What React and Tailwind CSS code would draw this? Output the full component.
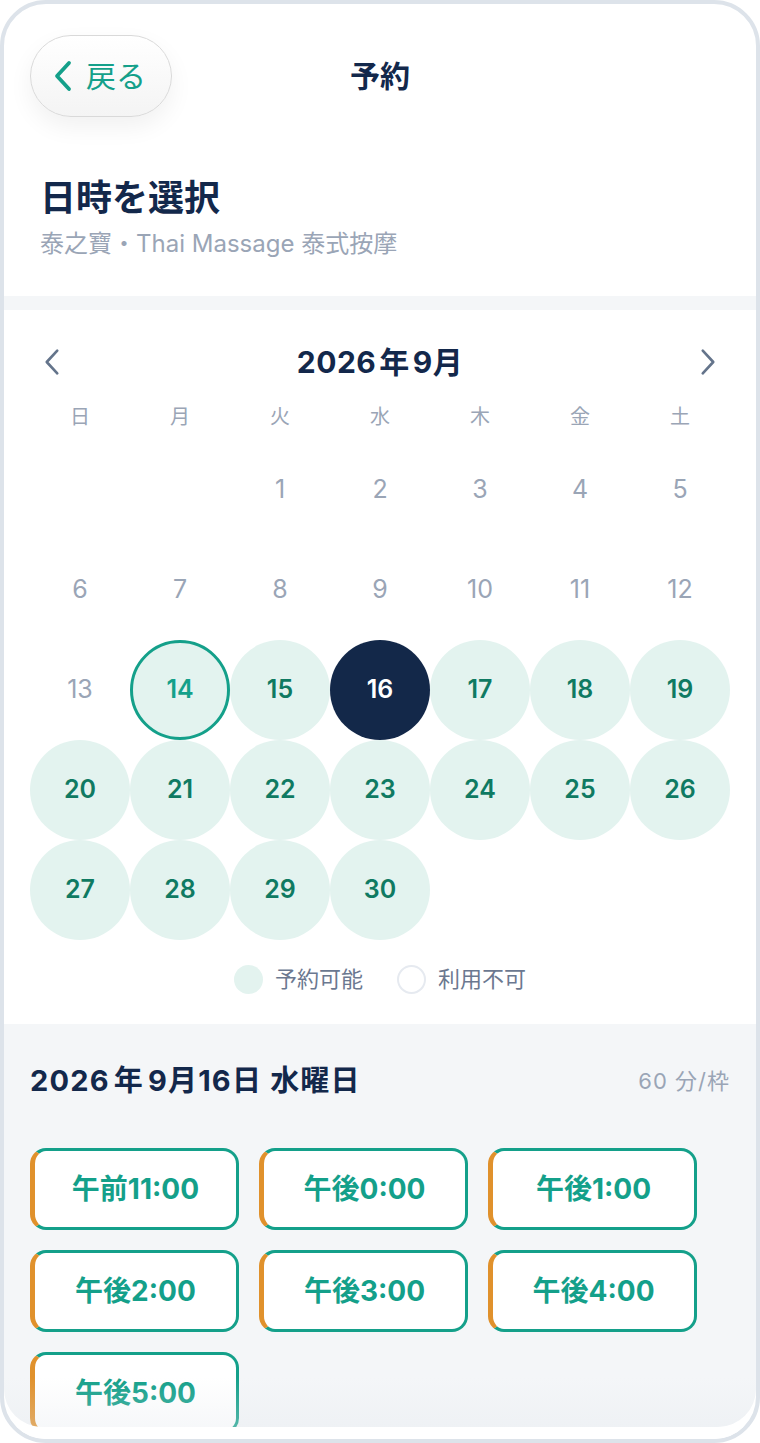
import React from "react";

const navy = "text-[#13284b]";

function Chevron({ dir = "left", className = "" }) {
  return (
    <svg viewBox="0 0 20 32" className={className} fill="none" stroke="currentColor" strokeLinecap="round" strokeLinejoin="round">
      {dir === "left" ? <path d="M16 3 L4 16 L16 29" /> : <path d="M4 3 L16 16 L4 29" />}
    </svg>
  );
}

const weekdays = ["日", "月", "火", "水", "木", "金", "土"];

function DayCell({ d }) {
  if (d === null) return <div className="h-[100px]" />;
  if (d < 14) {
    return (
      <div className="h-[100px] flex items-center justify-center text-[25px] text-[#9aa5b6]">{d}</div>
    );
  }
  if (d === 14) {
    return (
      <div className="h-[100px] flex items-center justify-center">
        <div className="w-[100px] h-[100px] rounded-full bg-[#e3f3ef] border-[3px] border-[#14a08a] flex items-center justify-center text-[25px] font-semibold text-[#14a08a]">
          {d}
        </div>
      </div>
    );
  }
  if (d === 16) {
    return (
      <div className="h-[100px] flex items-center justify-center">
        <div className="w-[100px] h-[100px] rounded-full bg-[#132849] flex items-center justify-center text-[25px] font-semibold text-white">
          {d}
        </div>
      </div>
    );
  }
  return (
    <div className="h-[100px] flex items-center justify-center">
      <div className="w-[100px] h-[100px] rounded-full bg-[#e3f3ef] flex items-center justify-center text-[25px] font-semibold text-[#0f7a62]">
        {d}
      </div>
    </div>
  );
}

const slots = ["午前11:00", "午後0:00", "午後1:00", "午後2:00", "午後3:00", "午後4:00", "午後5:00"];

export default function App() {
  const days = [null, null];
  for (let i = 1; i <= 30; i++) days.push(i);
  while (days.length < 35) days.push(null);

  return (
    <div className="w-[760px] h-[1443px] bg-white font-['Inter','Noto_Sans_CJK_JP',sans-serif]">
      <div className="w-full h-full border-4 border-[#dde3ea] rounded-[46px] bg-white overflow-hidden flex flex-col">
        <div className="relative flex-1 min-h-0 overflow-hidden rounded-b-[38px] flex flex-col">
          {/* header */}
          <div className="shrink-0 pt-[31px] px-[26px] grid grid-cols-[1fr_auto_1fr] items-center">
            <div>
              <button className="h-[82px] w-[142px] rounded-full border border-[#d9d9d9] bg-gradient-to-b from-white to-[#f4f4f4] shadow-[0_10px_24px_rgba(0,0,0,0.06)] flex items-center pl-[22px] gap-[13px] text-[#14a08a]">
                <Chevron dir="left" className="w-[20px] h-[32px] stroke-[3.8]" />
                <span className="text-[30px] leading-none">戻る</span>
              </button>
            </div>
            <div className={`text-[30px] font-semibold ${navy} leading-none`}>予約</div>
            <div />
          </div>

          {/* title */}
          <div className="shrink-0 px-[36px] pt-[59px] pb-[37px]">
            <div className={`text-[36px] font-bold leading-[44px] ${navy}`}>日時を選択</div>
            <div className="mt-[9px] text-[24px] leading-[30px] text-[#9aa5b6]">泰之寶・Thai Massage 泰式按摩</div>
          </div>

          <div className="shrink-0 h-[14px] bg-[#f4f6f8]" />

          {/* calendar */}
          <div className="shrink-0 bg-white pt-[30px] pb-[30px] px-[26px]">
            <div className="h-[44px] flex items-center justify-between px-[13px]">
              <Chevron dir="left" className="w-[18px] h-[28px] stroke-[3] text-[#64748b]" />
              <div className={`text-[30px] font-bold tracking-[0.5px] ${navy}`}>
                2026<span className="mx-[3px]">年</span>9月
              </div>
              <Chevron dir="right" className="w-[18px] h-[28px] stroke-[3] text-[#64748b]" />
            </div>
            <div className="mt-[16px] grid grid-cols-7 h-[34px] items-center">
              {weekdays.map((w) => (
                <div key={w} className="text-center text-[20px] text-[#9aa5b6]">{w}</div>
              ))}
            </div>
            <div className="mt-[6px] grid grid-cols-7">
              {days.map((d, i) => (
                <DayCell key={i} d={d} />
              ))}
            </div>
            <div className="mt-[24px] h-[30px] flex items-center justify-center gap-[34px] text-[22px] text-[#6b7890]">
              <div className="flex items-center gap-[12px]">
                <div className="w-[29px] h-[29px] rounded-full bg-[#e3f3ef]" />
                <span>予約可能</span>
              </div>
              <div className="flex items-center gap-[12px]">
                <div className="w-[29px] h-[29px] rounded-full border-2 border-[#e6eaf0]" />
                <span>利用不可</span>
              </div>
            </div>
          </div>

          {/* slots */}
          <div className="shrink-0 grow bg-[#f4f6f8] pt-[39px] pb-[40px] px-[26px]">
            <div className="flex items-center justify-between h-[36px]">
              <div className={`text-[29px] font-bold tracking-[1.2px] ${navy}`}>
                2026<span className="mx-[4px]">年</span>9月16日 水曜日
              </div>
              <div className="text-[22px] tracking-[1px] text-[#9aa5b6]">60 分/枠</div>
            </div>
            <div className="mt-[49px] grid grid-cols-[209px_209px_209px] gap-x-[20px] gap-y-[20px]">
              {slots.map((s) => (
                <div
                  key={s}
                  className="h-[82px] rounded-[16px] bg-white border-[3px] border-[#14a08a] border-l-[5px] border-l-[#e0912c] flex items-center justify-center text-[28px] font-bold text-[#14a08a]"
                >
                  {s}
                </div>
              ))}
            </div>
          </div>

          <div className="absolute left-0 right-0 bottom-0 h-[50px] bg-gradient-to-b from-transparent to-[#e2e7ed]/30" />
        </div>
        <div className="shrink-0 h-[12px] bg-white" />
      </div>
    </div>
  );
}
